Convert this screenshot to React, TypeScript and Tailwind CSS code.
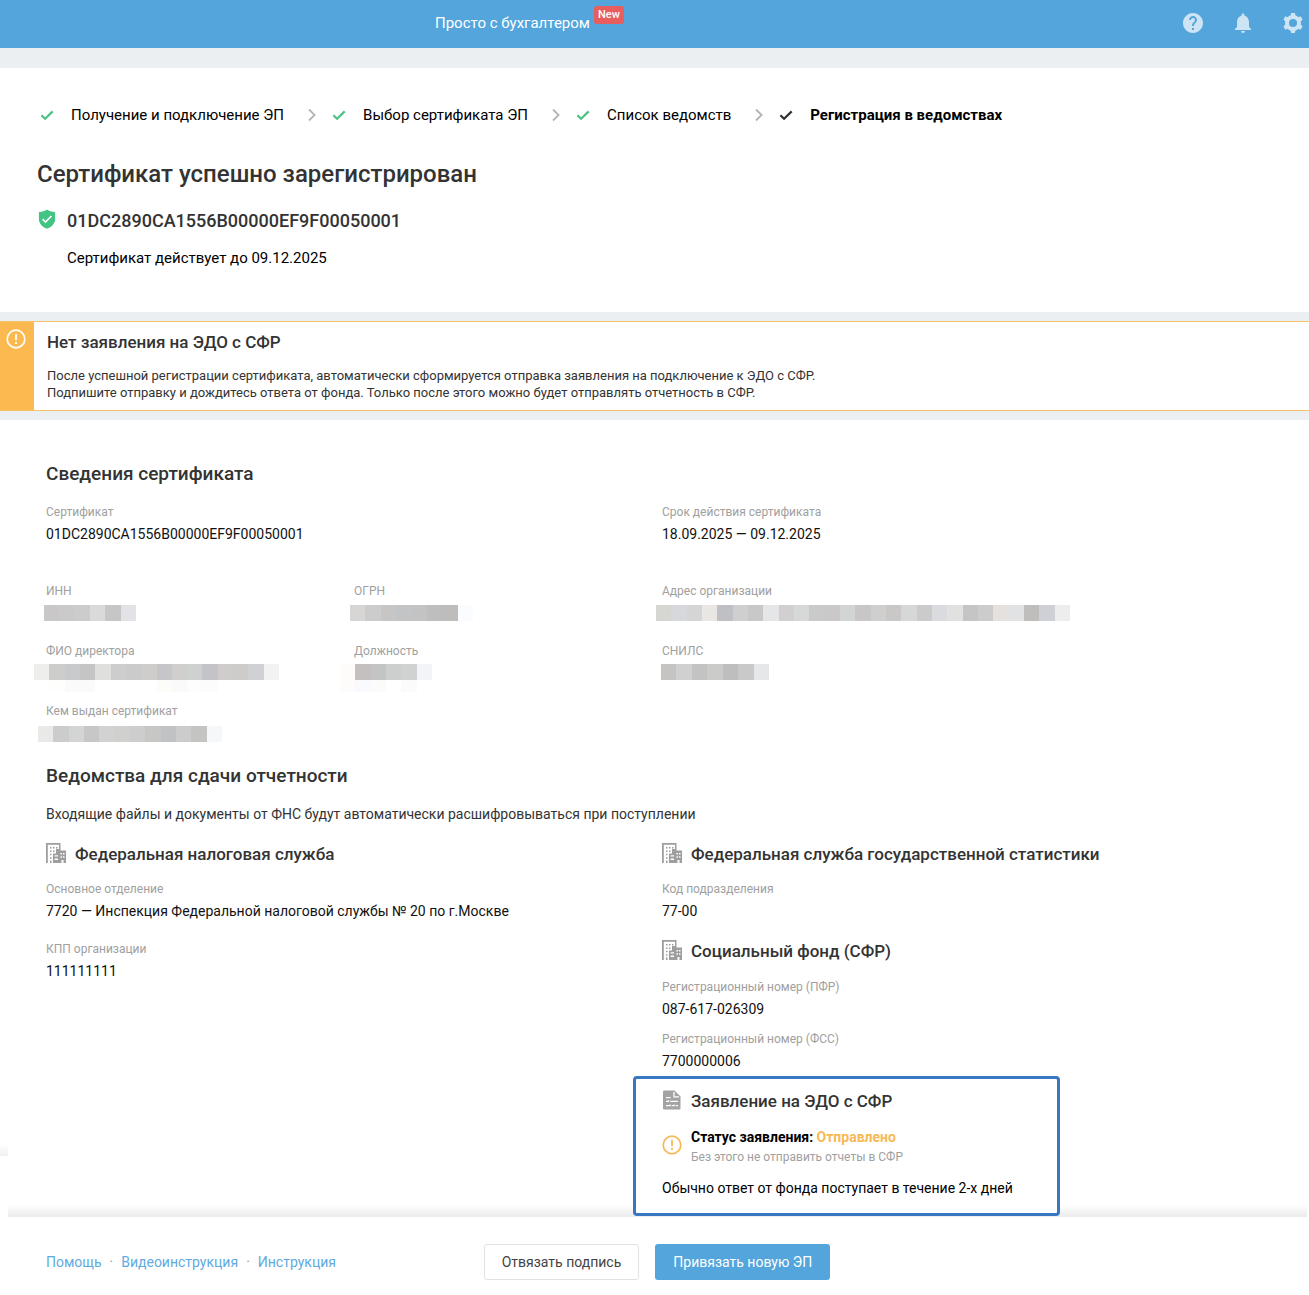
import React from "react";
import { MdHelp, MdNotifications } from "react-icons/md";

function GearIcon() {
  return (
    <svg viewBox="0 0 20 20" className="size-5" fill="currentColor" aria-hidden="true">
      {[0, 60, 120].map((angle) => (
        <g key={angle} transform={`rotate(${angle} 10 10)`}>
          <path d="M8.1 0h3.8l.6 3.6h-5zM7.5 16.4h5l-.6 3.6H8.1z" />
        </g>
      ))}
      <circle cx="10" cy="10" r="6" fill="none" stroke="currentColor" strokeWidth="4" />
    </svg>
  );
}

function CheckIcon({ className }: { className: string }) {
  return (
    <svg viewBox="0 0 16 16" className={`size-4 shrink-0 ${className}`} fill="none" stroke="currentColor" strokeWidth="2.2" aria-hidden="true">
      <path d="M2.4 8.2l3.7 3.6L13.7 4.4" />
    </svg>
  );
}

function ChevronIcon() {
  return (
    <svg viewBox="0 0 8 14" className="ml-6 mr-[15px] h-3.5 w-2 shrink-0 text-[#b4b4b4]" fill="none" stroke="currentColor" strokeWidth="1.8" aria-hidden="true">
      <path d="M1 1.5L6.6 7 1 12.5" />
    </svg>
  );
}

function ShieldIcon() {
  return (
    <svg viewBox="0 0 18 20" className="mb-1 h-5 w-[18px] shrink-0" aria-hidden="true">
      <path fill="#42c483" d="M9 .4c2 1.5 4.600 2.300 7.600 2.500.3 0 .5.3.5.6V10c0 4.600-3.600 8.400-8.100 9.700C4.500 18.400.9 14.600.9 10V3.500c0-.3.2-.6.5-.6C4.400 2.700 7 1.900 9 .4z" />
      <path fill="none" stroke="#fff" strokeWidth="1.7" d="M4.600 10.200l2.900 2.800 5.900-6" />
    </svg>
  );
}

function WarningIcon({ className }: { className: string }) {
  return (
    <svg viewBox="0 0 20 20" className={`shrink-0 ${className}`} fill="none" stroke="currentColor" aria-hidden="true">
      <circle cx="10" cy="10" r="8.8" strokeWidth="1.7" />
      <path d="M10 4.800v6.400M10 13v2" strokeWidth="1.8" />
    </svg>
  );
}

function BuildingIcon() {
  return (
    <svg viewBox="0 0 20 20" className="mb-[3px] size-5 shrink-0" aria-hidden="true">
      <g fill="#9e9e9e">
        <path d="M0 0h14.500v6H13V1.800H1.800V20H0z" />
        <path d="M4 4h1.500v1.500H4zM4 7.400h1.500v1.500H4zM4 10.800h1.500v1.500H4zM4 14.200h1.500v1.500H4zM7 4h1.500v1.500H7zM10 4h1.500v1.500H10zM7 7.400h1.500v1.500H7zM4 17.600h1.500V20H4z" />
        <path d="M10 6h4.500v1.500H20V20h-2.500v-3h-2v3H7v-9.500h3z" />
      </g>
      <path fill="#fff" d="M8.600 12.200h3.400v1.400H8.600zM8.600 15.600h3.400V17H8.600zM14.500 10h1.500v1.500h-1.500zM17 10h1.500v1.500H17zM14.500 13.200h1.500v1.500h-1.500zM17 13.200h1.500v1.500H17z" />
    </svg>
  );
}

function DocumentIcon() {
  return (
    <svg viewBox="0 0 20 20" className="mb-[3px] size-5 shrink-0" aria-hidden="true">
      <path fill="#a3a3a3" d="M2.300.5h10.200l6 6v11.700c0 .8-.6 1.300-1.300 1.300H2.300c-.7 0-1.300-.5-1.300-1.300V1.800C1 1.100 1.600.5 2.300.5z" />
      <path fill="none" stroke="#fff" strokeWidth="1.300" d="M12 2v4.900h5M4 7.700h4.600M4 11.300h2.500v-1M8.300 11.300h7.700M4 15.700h4v-1.200M9.600 15.700h2.500v-1.200M13.700 15.700H16" />
    </svg>
  );
}

const steps = ["Получение и подключение ЭП", "Выбор сертификата ЭП", "Список ведомств"];

function Label({ children }: { children: React.ReactNode }) {
  return <dt className="text-xs leading-5 text-[#a0a0a0]">{children}</dt>;
}

function Field({ label, children }: { label: string; children: React.ReactNode }) {
  return (
    <div>
      <Label>{label}</Label>
      <dd className="text-sm leading-6 text-[#111]">{children}</dd>
    </div>
  );
}

function Cells({ colors, className }: { colors: string[]; className: string }) {
  return (
    <div className={`flex ${className}`}>
      {colors.map((color, i) => (
        <span key={i} className={`flex-1 ${color}`} />
      ))}
    </div>
  );
}

function HiddenField({ label, colors, trail, className }: { label: string; colors: string[]; trail?: string[]; className: string }) {
  return (
    <div>
      <Label>{label}</Label>
      <dd className={`relative h-6 ${className}`} aria-label="Скрыто">
        <Cells colors={colors} className="h-4" />
        {trail && <Cells colors={trail} className="absolute inset-x-0 top-4 h-3" />}
      </dd>
    </div>
  );
}

const inn = ["bg-[#c9c7c7]", "bg-[#cbcaca]", "bg-[#cdcccc]", "bg-[#dadada]", "bg-[#c7c6c6]", "bg-[#e2e3e6]"];
const ogrn = ["bg-[#d7d6d4]", "bg-[#cccccd]", "bg-[#c8c6c4]", "bg-[#c2c4c6]", "bg-[#c3c3c3]", "bg-[#bfbebe]", "bg-[#bfbdbb]", "bg-[#fbfcff]"];
const address = [
  "bg-[#d6d7d2]", "bg-[#d7d8db]", "bg-[#d5d5d6]", "bg-[#eae6e3]", "bg-[#bfc0c6]", "bg-[#d0cfd0]", "bg-[#c9c8c8]",
  "bg-[#e5e6e8]", "bg-[#d2cfd1]", "bg-[#d7d9d8]", "bg-[#cbcacb]", "bg-[#cbc8ca]", "bg-[#d3d5d4]", "bg-[#c9c6c8]",
  "bg-[#cfcfd0]", "bg-[#cac8c6]", "bg-[#d6d8d7]", "bg-[#cccbcc]", "bg-[#dadbde]", "bg-[#e1e1e1]", "bg-[#c5c5c5]",
  "bg-[#cdcccd]", "bg-[#e5e1de]", "bg-[#e0e2e4]", "bg-[#c0bebc]", "bg-[#cfd0d6]", "bg-[#ededed]",
];
const director = [
  "bg-[#eeeeec]", "bg-[#cdcdcb]", "bg-[#c9cacd]", "bg-[#c5c5c5]", "bg-[#dfdfdd]", "bg-[#cdcdcd]", "bg-[#cbcbcb]", "bg-[#cecdcc]",
  "bg-[#c6c6ca]", "bg-[#d1cfcd]", "bg-[#cfd1d1]", "bg-[#c4c4c8]", "bg-[#cfcccb]", "bg-[#cdccca]", "bg-[#d0d1d4]", "bg-[#f2f2f2]",
];
const directorTrail = [
  "bg-white", "bg-[#fefefc]", "bg-[#fafafb]", "bg-[#fafafb]", "bg-white", "bg-white", "bg-white", "bg-white",
  "bg-[#fcfcf9]", "bg-[#fafafb]", "bg-[#fdfdfd]", "bg-[#fcfcfc]", "bg-white", "bg-white", "bg-white", "bg-white",
];
const position = ["bg-[#fefcfb]", "bg-[#c3c0bf]", "bg-[#c5c4c4]", "bg-[#cdcfcf]", "bg-[#d0d1d1]", "bg-[#f2f4f7]"];
const positionTrail = ["bg-[#fefcfb]", "bg-[#f8fafd]", "bg-[#fbfbfc]", "bg-white", "bg-[#fbfbfc]", "bg-white"];
const snils = ["bg-[#c5c4c3]", "bg-[#d0d0d0]", "bg-[#c3c3c3]", "bg-[#cbcbca]", "bg-[#bebebe]", "bg-[#c9c9c9]", "bg-[#e6e7e9]"];
const issuer = [
  "bg-[#e9e9e8]", "bg-[#cccccc]", "bg-[#d3d5d4]", "bg-[#c7c7c7]", "bg-[#d2d2d3]", "bg-[#d0d0ce]",
  "bg-[#cdcdcd]", "bg-[#c7c7c5]", "bg-[#c1c2c5]", "bg-[#cccccc]", "bg-[#c4c4c3]", "bg-[#f6f7f9]",
];

function AgencyHeading({ icon, children }: { icon: React.ReactNode; children: React.ReactNode }) {
  return (
    <h3 className="flex items-center gap-[9px] text-[17px] leading-6 font-medium text-[#333]">
      {icon}
      {children}
    </h3>
  );
}

export default function App() {
  return (
    <div className="bg-[#ebeff2] font-['Roboto',sans-serif] text-black">
      <header className="flex h-12 items-center justify-between bg-[#53a5dc] pr-1.5 pb-0.5 pl-[435px] text-white">
        <a href="#accountant" className="flex items-center gap-1 text-[15px] leading-5">
          Просто с бухгалтером
          <span className="mb-4 rounded-[3px] bg-[#e85e5e] px-1 text-[11px] leading-[18px] font-medium">New</span>
        </a>
        <div className="flex items-center gap-[26px] text-[#cde4f5]">
          <button type="button" aria-label="Помощь"><MdHelp className="size-6" /></button>
          <button type="button" aria-label="Уведомления"><MdNotifications className="size-6" /></button>
          <button type="button" aria-label="Настройки" className="ml-0.5"><GearIcon /></button>
        </div>
      </header>

      <section className="mt-5 bg-white px-[37px] pt-[37px] pb-11">
        <ol className="flex items-center pl-0.5 text-[15px] leading-5">
          {steps.map((step) => (
            <li key={step} className="flex items-center">
              <CheckIcon className="mr-4 text-[#4cc284]" />
              {step}
              <ChevronIcon />
            </li>
          ))}
          <li className="flex items-center font-bold" aria-current="step">
            <CheckIcon className="mr-4 text-[#333]" />
            Регистрация в ведомствах
          </li>
        </ol>
        <h1 className="mt-[33px] text-2xl leading-8 font-medium text-[#333]">Сертификат успешно зарегистрирован</h1>
        <div className="mt-[19px] flex items-center gap-[11px] pl-px text-lg leading-6 font-medium text-[#333]">
          <ShieldIcon />
          01DC2890CA1556B00000EF9F00050001
        </div>
        <p className="mt-[15px] pl-[30px] text-[15px] leading-5">Сертификат действует до 09.12.2025</p>
      </section>

      <section className="mt-[9px] flex border-y border-[#f5c268] bg-white">
        <div className="w-[34px] shrink-0 bg-[#fbb950] pt-[7px] pl-1.5 text-white">
          <WarningIcon className="size-5" />
        </div>
        <div className="px-[13px] pt-2 pb-[9px] text-[#333]">
          <h2 className="text-[17px] leading-6 font-medium">Нет заявления на ЭДО с СФР</h2>
          <p className="mt-[13px] text-[13px] leading-[17px]">
            После успешной регистрации сертификата, автоматически сформируется отправка заявления на подключение к ЭДО с СФР.
            <br />
            Подпишите отправку и дождитесь ответа от фонда. Только после этого можно будет отправлять отчетность в СФР.
          </p>
        </div>
      </section>

      <main className="relative mt-[9px] bg-white pt-[42px] pr-[31px] pb-px pl-[46px]">
        <h2 className="text-[19px] leading-6 font-medium text-[#333]">Сведения сертификата</h2>
        <dl className="mt-4 grid grid-cols-2">
          <Field label="Сертификат">01DC2890CA1556B00000EF9F00050001</Field>
          <Field label="Срок действия сертификата">18.09.2025 — 09.12.2025</Field>
        </dl>
        <dl className="mt-[35px] grid grid-cols-[1fr_1fr_2fr] gap-y-4">
          <HiddenField label="ИНН" colors={inn} className="mt-1 -mb-1 -ml-0.5 w-[92px]" />
          <HiddenField label="ОГРН" colors={ogrn} className="mt-1 -mb-1 -ml-1 w-[123px]" />
          <HiddenField label="Адрес организации" colors={address} className="mt-1 -mb-1 -ml-1.5 w-[414px]" />
          <HiddenField label="ФИО директора" colors={director} trail={directorTrail} className="mt-[3px] -mb-[3px] -ml-3 w-[245px]" />
          <HiddenField label="Должность" colors={position} trail={positionTrail} className="mt-[3px] -mb-[3px] -ml-3.5 w-[92px]" />
          <HiddenField label="СНИЛС" colors={snils} className="mt-[3px] -mb-[3px] -ml-px w-[108px]" />
          <HiddenField label="Кем выдан сертификат" colors={issuer} className="mt-[5px] -mb-[5px] -ml-2 w-[184px]" />
        </dl>

        <h2 className="mt-[19px] text-[19px] leading-6 font-medium text-[#333]">Ведомства для сдачи отчетности</h2>
        <p className="mt-4 text-sm leading-5 text-[#333]">
          Входящие файлы и документы от ФНС будут автоматически расшифровываться при поступлении
        </p>

        <div className="mt-[18px] grid grid-cols-2">
          <section>
            <AgencyHeading icon={<BuildingIcon />}>Федеральная налоговая служба</AgencyHeading>
            <dl className="mt-[13px] grid gap-4">
              <Field label="Основное отделение">7720 — Инспекция Федеральной налоговой службы № 20 по г.Москве</Field>
              <Field label="КПП организации">111111111</Field>
            </dl>
          </section>
          <div>
            <section>
              <AgencyHeading icon={<BuildingIcon />}>Федеральная служба государственной статистики</AgencyHeading>
              <dl className="mt-[13px]">
                <Field label="Код подразделения">77-00</Field>
              </dl>
            </section>
            <section className="mt-4">
              <AgencyHeading icon={<BuildingIcon />}>Социальный фонд (СФР)</AgencyHeading>
              <dl className="mt-[14px] grid gap-2">
                <Field label="Регистрационный номер (ПФР)">087-617-026309</Field>
                <Field label="Регистрационный номер (ФСС)">7700000006</Field>
              </dl>
            </section>
            <section className="relative z-10 mt-[3px] -ml-[29px] w-[427px] rounded-[4px] border-3 border-[#3878c2] bg-white px-[26px] pt-2.5 pb-[15px]">
              <AgencyHeading icon={<DocumentIcon />}>Заявление на ЭДО с СФР</AgencyHeading>
              <div className="mt-3.5 flex items-center gap-[9px]">
                <WarningIcon className="mb-1.5 size-5 text-[#f7b955]" />
                <div>
                  <p className="text-sm leading-5 font-bold">
                    Статус заявления: <span className="text-[#f7b955]">Отправлено</span>
                  </p>
                  <p className="text-xs leading-[21px] text-[#a0a0a0]">Без этого не отправить отчеты в СФР</p>
                </div>
              </div>
              <p className="mt-2.5 text-sm leading-5">Обычно ответ от фонда поступает в течение 2-х дней</p>
            </section>
          </div>
        </div>
        <span className="absolute bottom-[61px] left-0 h-3 w-2 bg-linear-to-b from-white to-[#f0f0f0]" />
      </main>

      <footer className="relative grid grid-cols-[1fr_auto_1fr] items-center bg-white pt-[27px] pr-[41px] pb-4 pl-[46px] text-sm leading-5">
        <span className="absolute -top-3 right-0.5 left-2 h-3 bg-linear-to-b from-white to-[#ebebeb]" />
        <nav className="flex items-center gap-2 text-[#5fabe0]">
          <a href="#help">Помощь</a>
          <span className="text-[#999]">·</span>
          <a href="#video">Видеоинструкция</a>
          <span className="text-[#999]">·</span>
          <a href="#manual">Инструкция</a>
        </nav>
        <div className="flex gap-4">
          <button type="button" className="rounded-[3px] border border-[#e2e2e2] bg-white px-[17px] py-[7px] text-[#444]">Отвязать подпись</button>
          <button type="button" className="rounded-[3px] bg-[#53a5dc] px-[18px] py-2 text-white">Привязать новую ЭП</button>
        </div>
      </footer>
    </div>
  );
}
